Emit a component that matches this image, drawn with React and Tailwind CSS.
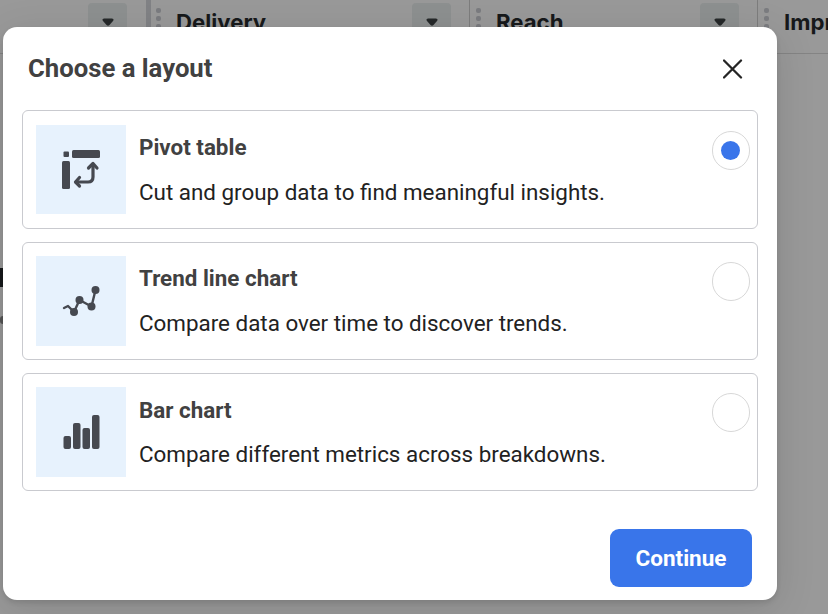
import React from "react";

function PivotIcon() {
  return (
    <svg width="90" height="90" viewBox="0 0 90 90" fill="#464950">
      <rect x="27.5" y="26.5" width="5.5" height="5.5" rx="1" />
      <rect x="36" y="25" width="28" height="8" rx="1.5" />
      <rect x="26" y="36" width="8" height="28" rx="1.5" />
      <g fill="none" stroke="#464950" strokeWidth="3.2" strokeLinecap="round" strokeLinejoin="round">
        <path d="M40 57H52Q57 57 57 52V40" />
        <path d="M43.500 52.500L39.500 57L43.500 61" />
        <path d="M52.500 43L57 38.500L61 43" />
      </g>
    </svg>
  );
}

function TrendIcon() {
  return (
    <svg width="90" height="90" viewBox="0 0 90 90" fill="#464950">
      <path
        d="M28 52L32 50L38 56L43.500 44L55.500 50.500L59.500 34"
        fill="none"
        stroke="#464950"
        strokeWidth="2.400"
        strokeLinecap="round"
        strokeLinejoin="round"
      />
      <circle cx="38" cy="56" r="4" />
      <circle cx="43.500" cy="44" r="4" />
      <circle cx="55.500" cy="50.500" r="4" />
      <circle cx="59.500" cy="34" r="4" />
    </svg>
  );
}

function BarIcon() {
  return (
    <svg width="90" height="90" viewBox="0 0 90 90" fill="#464950">
      <rect x="27.500" y="49" width="7.500" height="13" rx="2" />
      <rect x="37" y="36" width="7.500" height="26" rx="2" />
      <rect x="46.500" y="41" width="7.500" height="21" rx="2" />
      <rect x="56" y="28" width="7.500" height="34" rx="2" />
    </svg>
  );
}

const options = [
  { title: "Pivot table", text: "Cut and group data to find meaningful insights.", Icon: PivotIcon, selected: true, box: "h-[119px] pt-[14px]", tile: "h-[89px]", head: "mt-[7px]", body: "mt-[15px]", radio: "mt-[6px]" },
  { title: "Trend line chart", text: "Compare data over time to discover trends.", Icon: TrendIcon, box: "h-[118px] pt-[13px]", tile: "h-[90px]", head: "mt-[7px]", body: "mt-[15px]", radio: "mt-[6px]" },
  { title: "Bar chart", text: "Compare different metrics across breakdowns.", Icon: BarIcon, box: "h-[118px] pt-[13px]", tile: "h-[90px]", head: "mt-[8px]", body: "mt-[14px]", radio: "mt-[6px]" },
];

function Option({ title, text, Icon, selected, box, tile, head, body, radio }) {
  return (
    <div className={"flex rounded-[6px] border border-[#c9cacf] pl-[13px] pr-[7px] " + box}>
      <div className={"w-[90px] shrink-0 overflow-hidden bg-[#e7f2fd] " + tile}>
        <Icon />
      </div>
      <div className="ml-[13px] flex-1 whitespace-nowrap">
        <div className={"text-[22.400px] font-bold leading-[30px] text-[#414141] " + head}>{title}</div>
        <div className={"text-[22.400px] leading-[30px] text-[#222] " + body}>{text}</div>
      </div>
      <div className={"flex h-[39px] w-[38px] shrink-0 items-center justify-center rounded-full border border-[#d8d8d8] pr-[1px] " + radio}>
        {selected && <div className="size-[19px] rounded-full bg-[#3975ea]" />}
      </div>
    </div>
  );
}

function HeaderCell({ label, cell }) {
  return (
    <div className={"flex h-[54px] shrink-0 items-start border-b border-[#848484] " + cell}>
      {label && (
        <div className="ml-[5px] mt-[8px] flex flex-col gap-[3px]">
          <i className="size-[5px] rounded-[2px] bg-[#7b7c80]" />
          <i className="size-[5px] rounded-[2px] bg-[#7b7c80]" />
          <i className="size-[5px] rounded-[2px] bg-[#7b7c80]" />
        </div>
      )}
      {label && <span className="ml-[15px] mt-[7px] text-[22.200px] font-bold leading-[30px] text-[#17191b]">{label}</span>}
      <div className="ml-auto mt-[3px] flex h-[38px] w-[39px] justify-center rounded-[4px] bg-[#8d9090] pt-[15px]">
        <svg width="12" height="9" viewBox="0 0 12 9" fill="#252829">
          <path d="M2 0.500H10Q12.500 1 11 3L7.500 7Q6 8.500 4.500 7L1 3Q-0.500 1 2 0.500Z" />
        </svg>
      </div>
    </div>
  );
}

export default function App() {
  return (
    <div className="relative h-[614px] w-[828px] overflow-hidden bg-[#999] font-['Roboto',sans-serif]">
      <div className="flex w-[1100px] font-['Inter',sans-serif]">
        <HeaderCell cell="w-[151px] border-r-[5px] border-r-[#818285] pr-[19px]" />
        <HeaderCell label="Delivery" cell="w-[319px] border-r border-r-[#7d7d7d] pr-[18px]" />
        <HeaderCell label="Reach" cell="w-[288px] border-r border-r-[#7d7d7d] pl-px pr-[18px]" />
        <HeaderCell label="Impressions" cell="w-[320px] pl-px pr-[18px]" />
      </div>
      <div className="mt-[214px] h-[19px] w-[3px] bg-[#17191b]" />
      <div className="mt-[29px] h-[8px] w-[3px] rounded-l-full bg-[#555]" />

      <div role="dialog" className="absolute left-[3px] top-[27px] flex h-[573px] w-[774px] flex-col rounded-[14px] bg-white pl-[19px] pr-[19px] shadow-[0_3px_5px_rgba(0,0,0,0.1),0_8px_40px_rgba(0,0,0,0.12)]">
        <div className="flex h-[83px] shrink-0 justify-between pl-[6px] pr-[15px]">
          <h1 className="mt-[25px] text-[25.700px] font-bold leading-[32px] text-[#414141]">Choose a layout</h1>
          <svg className="mt-[32px]" width="20" height="20" viewBox="0 0 20 20" fill="none" stroke="#252525" strokeWidth="2.300" strokeLinecap="round">
            <path d="M1 1.500L18 18.500M18 1.500L1 18.500" />
          </svg>
        </div>
        <div className="flex flex-col gap-[13px]">
          {options.map((o) => (
            <Option key={o.title} {...o} />
          ))}
        </div>
        <button className="mr-[6px] mt-[38px] flex h-[58px] w-[142px] shrink-0 items-center justify-center self-end rounded-[9px] bg-[#3975ea] pt-[1px] text-[22.500px] font-bold text-white">
          Continue
        </button>
      </div>
    </div>
  );
}
